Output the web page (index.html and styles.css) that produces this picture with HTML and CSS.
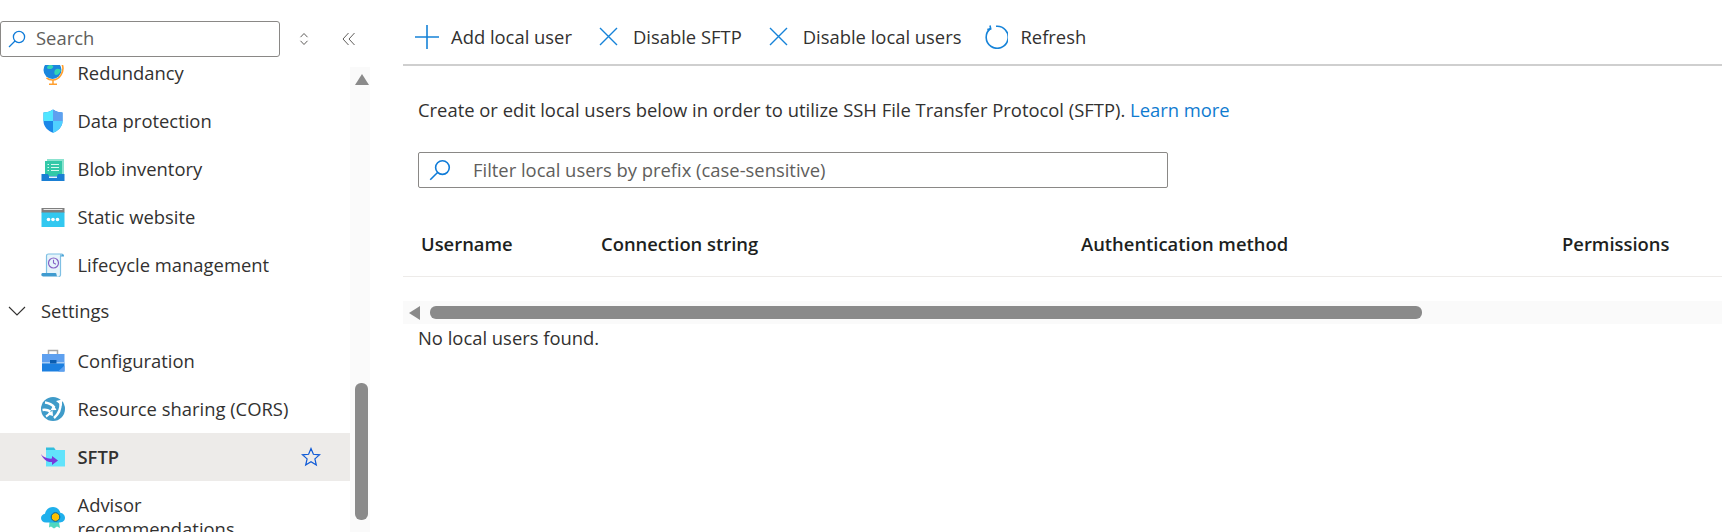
FILE: index.html
```html
<!DOCTYPE html>
<html lang="en">
<head>
  <meta charset="UTF-8" />
  <title>SFTP</title>
  <link rel="stylesheet" href="styles.css">
</head>
<body>
  <div class="page">
    <aside class="sidebar">
      <div class="side-top">
        <div class="search-box">
          <svg class="search-icon" viewBox="0 0 18 18"><circle cx="11" cy="7" r="5.6" /><path d="M7 11L1 17" /></svg>
          <span>Search</span>
        </div>
        <svg class="updown" viewBox="0 0 12 16"><path d="M2.500 6.200L6 2.500l3.500 3.700M2.500 9.800L6 13.500l3.500-3.700" /></svg>
        <svg class="collapse" viewBox="0 0 14 14"><path d="M6.500 1L1 7l5.500 6M12.500 1L7 7l5.500 6" /></svg>
      </div>
      <div class="side-body">
        <ul class="nav-list">
          <li class="nav-item">
            <svg class="nav-icon" viewBox="0 0 24 24"><circle cx="11.500" cy="9" r="9" fill="#1b87dd" /><path d="M6 6c2-3 5-2 6-1s-1 3-3 3-3 0-3-2zM14 9c2-2 4-1 6 0-1 3-3 5-5 5s-2-3-1-5z" fill="#32d4b5" /><path d="M21 3c3 7-2 16-9.500 16-2.500 0-4.500-.8-6-2.200" fill="none" stroke="#ff9f2e" stroke-width="1.600" /><path d="M12 19v4M8 23.300h8" fill="none" stroke="#ff9f2e" stroke-width="1.500" /></svg>
            <span>Redundancy</span>
          </li>
          <li class="nav-item">
            <svg class="nav-icon" viewBox="0 0 24 24"><path d="M12 0.500C9.500 2.500 6 3.500 2.500 3.500V12c0 6 4.500 9.800 9.500 11.800 5-2 9.500-5.800 9.500-11.800V3.500C18 3.500 14.500 2.500 12 0.500z" fill="#1b87e8" /><path d="M12 0.500C9.500 2.500 6 3.500 2.500 3.500V12H12z" fill="#50e6ff" /><path d="M12 0.500C14.500 2.500 18 3.500 21.500 3.500V12H12z" fill="#5ea0ef" /><path d="M12 12h9.500c0 6-4.500 9.800-9.500 11.800z" fill="#50d0ff" /></svg>
            <span>Data protection</span>
          </li>
          <li class="nav-item">
            <svg class="nav-icon" viewBox="0 0 24 24"><path d="M6 2h17v15H6z" fill="#8be3cf" /><path d="M4 4h17v15H4z" fill="#32c8a8" /><path d="M6.500 7.500h1.500M10 7.500h8M6.500 10.500h1.500M10 10.500h8M6.500 13.500h1.500M10 13.500h8" stroke="#d8f8f0" stroke-width="1.200" /><path d="M0.500 17h6.500l1 2h8l1-2h6.500v7H0.500z" fill="#1a7fd4" /><path d="M8 19.500h8v1.500H8z" fill="#e5f3fc" /></svg>
            <span>Blob inventory</span>
          </li>
          <li class="nav-item">
            <svg class="nav-icon" viewBox="0 0 24 24"><path d="M0.500 7h23v15h-23z" fill="#32c8f0" /><path d="M0.500 3h23v4.500h-23z" fill="#7f7f7f" /><path d="M2.500 4.500h19" stroke="#e8e8e8" stroke-width="1" /><circle cx="7.500" cy="14.500" r="1.800" fill="#fff" /><circle cx="12" cy="14.500" r="1.800" fill="#fff" /><circle cx="16.500" cy="14.500" r="1.800" fill="#fff" /></svg>
            <span>Static website</span>
          </li>
          <li class="nav-item">
            <svg class="nav-icon" viewBox="0 0 24 24"><path d="M5.500 20V3c0-1.300 1-2 2-2h14c-1.200 0-2 .8-2 2v19c0 .8-1 1.500-2 1.500" fill="#e6f4fb" stroke="#7fc0e4" stroke-width="1.200" /><path d="M21.500 1c1 0 1.500 1 1.500 2.500h-3.500" fill="#4aa3d6" /><path d="M1 23c-.8 0-1-3 .5-3h13c.8 0 1 .8 1 1.500 0 1 .8 2 1.800 2H2z" fill="#3f9bd0" /><circle cx="12.500" cy="10" r="5" fill="none" stroke="#8661c5" stroke-width="1.200" /><path d="M12.500 6.800V10l2.500 1.200" fill="none" stroke="#8661c5" stroke-width="1.100" /></svg>
            <span>Lifecycle management</span>
          </li>
          <li class="nav-group">
            <svg class="chevron" viewBox="0 0 18 10"><path d="M1 1l8 8 8-8" /></svg>
            <span>Settings</span>
          </li>
          <li class="nav-item">
            <svg class="nav-icon" viewBox="0 0 24 24"><path d="M7.500 6V1.500h9V6" fill="none" stroke="#a6a6a6" stroke-width="1.500" /><path d="M1 5h22.500v9H1z" fill="#5ea0ef" /><path d="M1 14h22.500v8.500H1z" fill="#1b7fe0" /><path d="M1 13h22.500v1.500H1z" fill="#a6ccf5" /><path d="M9 11h6.500v3.500H9z" fill="#0a5cb0" /><path d="M17 22.500l6.500-6v6z" fill="#5ea0ef" /></svg>
            <span>Configuration</span>
          </li>
          <li class="nav-item">
            <svg class="nav-icon" viewBox="0 0 24 24"><circle cx="12" cy="12" r="12" fill="#3f9bc9" /><g fill="none" stroke="#fff" stroke-width="2.400"><path d="M4 5.500c4 .5 7 2 9.500 5" /><path d="M19.500 6c.5 6-2 11-6.500 15" /><path d="M1.500 13c3-.5 5.500 0 8 1.500" /><path d="M9.500 15c-1 2-2.500 3.500-4.500 4.500" /></g><path d="M15 4l6-1.500V9zM15.500 13l-6 .2 3-5.200zM11.500 13.500L7 17.500l5 1.500z" fill="#fff" /></svg>
            <span>Resource sharing (CORS)</span>
          </li>
          <li class="nav-item active">
            <svg class="nav-icon" viewBox="0 0 24 24"><path d="M5 2.500h8l2 3H5z" fill="#32bedd" /><path d="M5 5h19v16.500H5z" fill="#62e3fb" /><path d="M0 9c2 3 6 5 11 4.600V11l6 4.500-6 4.500v-3C6 17.500 2 14 0 9z" fill="#773adc" /></svg>
            <span>SFTP</span>
            <svg class="star" viewBox="0 0 20 20"><path d="M10 1.500l2.400 5.800 6.200.5-4.700 4.100 1.400 6.100L10 14.700l-5.300 3.300 1.400-6.100L1.400 7.800l6.200-.5z" /></svg>
          </li>
          <li class="nav-item tall">
            <svg class="nav-icon" viewBox="0 0 24 24"><path d="M8.500 17h9.500l1 6-3-1.500-3 2-3-2-2 1z" fill="#4fd8c0" /><path d="M5 17.500c-3 0-5-2-5-4.500 0-2.300 1.800-4 4-4.300C4.500 5 7.800 2 12 2c3.500 0 6.500 2.300 7.300 5.800 2.500.3 4.700 2.400 4.700 5 0 2.700-2.200 4.700-5 4.700z" fill="#1fb0ec" /><circle cx="14.500" cy="12" r="4.300" fill="#ffc000" stroke="#0b5d8f" stroke-width="1" /></svg>
            <span>Advisor recommendations</span>
          </li>
        </ul>
        <div class="side-scroll">
          <div class="arrow-up"></div>
          <div class="side-thumb"></div>
        </div>
      </div>
    </aside>

    <main class="content">
      <div class="toolbar">
        <div class="tool">
          <svg class="tool-icon" viewBox="0 0 24 24"><path d="M12 0v24M0 12h24" /></svg>
          <span>Add local user</span>
        </div>
        <div class="tool">
          <svg class="tool-icon x-icon" viewBox="0 0 19 19"><path d="M1 1l17 17M18 1L1 18" /></svg>
          <span>Disable SFTP</span>
        </div>
        <div class="tool">
          <svg class="tool-icon x-icon" viewBox="0 0 19 19"><path d="M1 1l17 17M18 1L1 18" /></svg>
          <span>Disable local users</span>
        </div>
        <div class="tool tool-refresh">
          <svg class="tool-icon" viewBox="0 0 24 24"><path d="M6.500 3.500A11 11 0 1 0 12 1.300" /><path d="M6 0.500l.7 3.400-3.400.7" /></svg>
          <span>Refresh</span>
        </div>
      </div>

      <div class="panel">
        <p class="intro">Create or edit local users below in order to utilize SSH File Transfer Protocol (SFTP). <a href="#">Learn more</a></p>
        <div class="filter-box">
          <svg class="search-icon" viewBox="0 0 18 18"><circle cx="11" cy="7" r="5.6" /><path d="M7 11L1 17" /></svg>
          <span>Filter local users by prefix (case-sensitive)</span>
        </div>
      </div>

      <div class="table-head">
        <div class="col-user">Username</div>
        <div class="col-conn">Connection string</div>
        <div class="col-auth">Authentication method</div>
        <div class="col-perm">Permissions</div>
      </div>

      <div class="h-scroll">
        <div class="arrow-left"></div>
        <div class="h-thumb"></div>
      </div>
      <p class="empty">No local users found.</p>
    </main>
  </div>
</body>
</html>
```

FILE: styles.css
```css
* {
  margin: 0;
  padding: 0;
  box-sizing: border-box;
}

html, body {
  height: 100%;
  overflow: hidden;
  background: #fff;
  font-family: "Open Sans", sans-serif;
  font-size: 18.4px;
  color: #323130;
}

.page {
  display: flex;
  height: 532px;
}

.sidebar {
  width: 370px;
  flex: none;
  display: flex;
  flex-direction: column;
}

.side-top {
  height: 65px;
  flex: none;
  padding-top: 21px;
  display: flex;
  align-items: flex-start;
}

.search-box {
  width: 280px;
  height: 36px;
  border: 1px solid #8a8886;
  border-radius: 3px;
  display: flex;
  align-items: center;
  padding-left: 7px;
  gap: 10px;
  color: #605e5c;
}

.search-box span {
  padding-bottom: 3px;
}

.search-icon {
  width: 18px;
  height: 18px;
  flex: none;
  fill: none;
  stroke: #0f7bd8;
  stroke-width: 1.3;
}

.updown {
  width: 12px;
  height: 16px;
  margin: 10px 0 0 18px;
  fill: none;
  stroke: #605e5c;
  stroke-width: 1;
}

.collapse {
  width: 14px;
  height: 14px;
  margin: 11px 0 0 32px;
  fill: none;
  stroke: #605e5c;
  stroke-width: 1;
}

.side-body {
  flex: 1;
  display: flex;
  overflow: hidden;
}

.nav-list {
  list-style: none;
  width: 350px;
  flex: none;
  margin-top: -16px;
}

.nav-item,
.nav-group {
  min-height: 48px;
  display: flex;
  align-items: center;
}

.nav-item {
  padding-left: 41px;
}

.nav-item span {
  margin-left: 12.5px;
  line-height: 24px;
  width: 215px;
}

.nav-item.tall {
  padding: 12px 0 12px 41px;
}

.nav-item.active span {
  font-weight: 600;
}

.nav-icon {
  width: 24px;
  height: 24px;
  flex: none;
}

.nav-item.active {
  background: #edebe9;
}

.star {
  width: 20px;
  height: 20px;
  margin-left: 8px;
  fill: none;
  stroke: #0f5ad6;
  stroke-width: 1.2;
}

.nav-group {
  padding: 0 0 5px 8px;
}

.nav-group span {
  margin-left: 15px;
}

.chevron {
  width: 18px;
  height: 10px;
  fill: none;
  stroke: #323130;
  stroke-width: 1.1;
}

.side-scroll {
  flex: 1;
  background: #fafafa;
  padding: 7px 2px 0 5px;
  margin-top: 2px;
}

.arrow-up {
  width: 0;
  height: 0;
  border-left: 7px solid transparent;
  border-right: 7px solid transparent;
  border-bottom: 11px solid #8a8a8a;
}

.side-thumb {
  width: 13px;
  height: 137px;
  margin-top: 298px;
  background: #8a8a8a;
  border-radius: 6px;
}

.content {
  flex: 1;
  min-width: 0;
}

.toolbar {
  height: 66px;
  margin-left: 33px;
  border-bottom: 2px solid #cfcfcf;
  padding-left: 12px;
  display: flex;
  align-items: center;
  gap: 27px;
}

.tool {
  display: flex;
  align-items: center;
  gap: 12px;
  margin-top: 9px;
}

.tool-refresh {
  margin-left: -4px;
}

.tool-icon {
  width: 24px;
  height: 24px;
  flex: none;
  fill: none;
  stroke: #1683d8;
  stroke-width: 1.6;
}

.x-icon {
  width: 19px;
  height: 19px;
  margin-right: 3px;
  stroke-width: 1.4;
}

.panel {
  padding: 32px 0 0 48px;
}

.intro {
  line-height: 24px;
}

.intro a {
  color: #0f7bd0;
  text-decoration: none;
}

.filter-box {
  width: 750px;
  height: 36px;
  margin-top: 30px;
  border: 1px solid #8a8886;
  border-radius: 2px;
  padding-left: 10px;
  display: flex;
  align-items: center;
  gap: 22px;
  color: #605e5c;
}

.filter-box .search-icon {
  width: 22px;
  height: 22px;
}

.filter-box span {
  padding-bottom: 2px;
}

.table-head {
  margin: 36px 0 0 33px;
  height: 53px;
  padding-bottom: 13px;
  border-bottom: 1px solid #edebe9;
  display: flex;
  align-items: center;
  font-weight: 600;
  color: #201f1e;
}

.col-user {
  width: 198px;
  padding-left: 18px;
}

.col-conn {
  width: 480px;
}

.col-auth {
  width: 481px;
}

.h-scroll {
  margin: 24px 0 0 33px;
  height: 23px;
  background: #fafafa;
  display: flex;
  align-items: center;
  padding-left: 6px;
}

.arrow-left {
  width: 0;
  height: 0;
  border-top: 7px solid transparent;
  border-bottom: 7px solid transparent;
  border-right: 11px solid #8a8a8a;
}

.h-thumb {
  width: 992px;
  height: 13px;
  margin-left: 10px;
  background: #8a8a8a;
  border-radius: 6px;
}

.empty {
  margin: 2px 0 0 48px;
  line-height: 24px;
}
```
